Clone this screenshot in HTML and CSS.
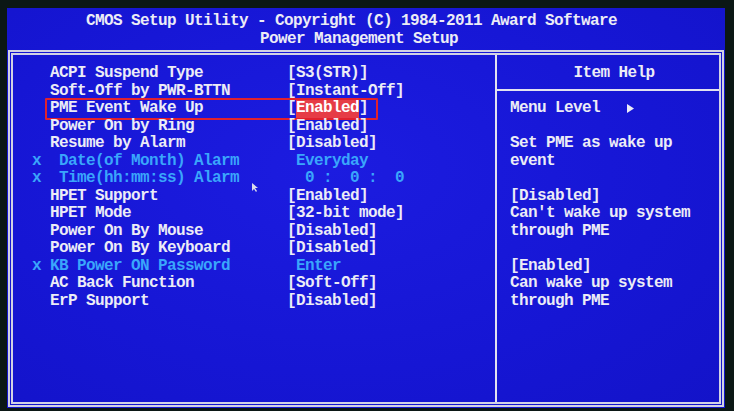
FILE: index.html
```html
<!DOCTYPE html>
<html>
<head>
<meta charset="utf-8">
<link rel="stylesheet" href="styles.css">
</head>
<body>
<div class="screen">
  <header class="title">
    <div class="t1">CMOS Setup Utility - Copyright (C) 1984-2011 Award Software</div>
    <div class="t2">Power Management Setup</div>
  </header>
  <div class="frame">
    <section class="items">
      <div class="row"><span class="label">  ACPI Suspend Type</span><span class="value">[S3(STR)]</span></div>
      <div class="row"><span class="label">  Soft-Off by PWR-BTTN</span><span class="value">[Instant-Off]</span></div>
      <div class="row marked"><span class="label">  PME Event Wake Up</span><span class="value">[<span class="sel">Enabled</span>]</span><span class="mark-box"></span></div>
      <div class="row"><span class="label">  Power On by Ring</span><span class="value">[Enabled]</span></div>
      <div class="row"><span class="label">  Resume by Alarm</span><span class="value">[Disabled]</span></div>
      <div class="row dim"><span class="label">x  Date(of Month) Alarm</span><span class="value"> Everyday</span></div>
      <div class="row dim"><span class="label">x  Time(hh:mm:ss) Alarm</span><span class="value">  0 :  0 :  0</span></div>
      <div class="row"><span class="label">  HPET Support</span><span class="value">[Enabled]</span></div>
      <div class="row"><span class="label">  HPET Mode</span><span class="value">[32-bit mode]</span></div>
      <div class="row"><span class="label">  Power On By Mouse</span><span class="value">[Disabled]</span></div>
      <div class="row"><span class="label">  Power On By Keyboard</span><span class="value">[Disabled]</span></div>
      <div class="row dim"><span class="label">x KB Power ON Password</span><span class="value"> Enter</span></div>
      <div class="row"><span class="label">  AC Back Function</span><span class="value">[Soft-Off]</span></div>
      <div class="row"><span class="label">  ErP Support</span><span class="value">[Disabled]</span></div>
    </section>
    <aside class="help">
      <div class="help-head">Item Help</div>
      <div class="help-body">
        <p class="para">Menu Level   <svg class="tri" width="7" height="9" viewBox="0 0 7 9"><polygon points="0,0 7,4.5 0,9" fill="#ececf6"/></svg></p>
        <p class="para">Set PME as wake up<br>event</p>
        <p class="para">[Disabled]<br>Can't wake up system<br>through PME</p>
        <p class="para">[Enabled]<br>Can wake up system<br>through PME</p>
      </div>
    </aside>
  </div>
  <svg class="cursor" width="6" height="9" viewBox="0 0 6 9"><polygon points="0,0 0,8 2,6 4,9 5,8 3,5 6,5" fill="#dcdcea"/></svg>
</div>
</body>
</html>
```

FILE: styles.css
```css
html, body {
  margin: 0;
  padding: 0;
}
body {
  background: #0b1715;
  width: 734px;
  height: 411px;
  overflow: hidden;
  font-family: "Liberation Mono", "DejaVu Sans Mono", monospace;
  font-weight: bold;
  font-size: 16px;
  letter-spacing: -0.6px;
  color: #ececf6;
}
.screen {
  position: relative;
  margin: 8px 0 0 7px;
  width: 718px;
  height: 400px;
  box-sizing: border-box;
  padding: 4px 1px 1px 1px;
  background: radial-gradient(ellipse at 45% 40%, #1c1ce0 0%, #1616d4 60%, #1313c8 100%);
  display: flex;
  flex-direction: column;
}
.title {
  height: 38px;
  line-height: 18px;
}
.t1, .t2 { white-space: pre; }
.t1 { padding-left: 78px; }
.t2 { padding-left: 252px; }
.frame {
  flex: 1;
  display: flex;
  border: 5px double #d2d2e4;
}
.items {
  width: 484px;
  box-sizing: border-box;
  padding: 10px 0 0 19px;
  border-right: 2px solid #e2e2f0;
}
.row {
  position: relative;
  display: flex;
  height: 17.5px;
  line-height: 17.5px;
}
.label, .value { white-space: pre; }
.label { width: 255px; }
.dim { color: #3aa6fb; }
.sel {
  display: inline-block;
  background: #e63c46;
  color: #ffffff;
}
.mark-box {
  position: absolute;
  left: 13px;
  top: -2.5px;
  width: 333px;
  height: 22px;
  box-sizing: border-box;
  border: 2px solid #e0222e;
  border-radius: 1px;
}
.help {
  flex: 1;
  display: flex;
  flex-direction: column;
}
.help-head {
  height: 36px;
  box-sizing: border-box;
  padding: 3px 0 0 12px;
  line-height: 31px;
  text-align: center;
  border-bottom: 2px solid #e2e2f0;
}
.help-body {
  padding: 9px 0 0 13px;
  line-height: 17.5px;
}
.para {
  margin: 0 0 17.5px 0;
  white-space: pre;
}
.tri {
  vertical-align: -1px;
}
.cursor {
  position: absolute;
  left: 245px;
  top: 175px;
}
```
